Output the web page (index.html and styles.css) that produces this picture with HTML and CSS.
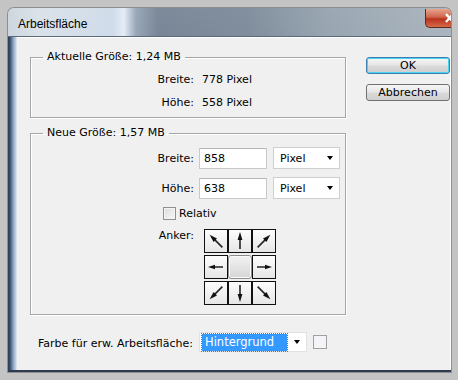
FILE: index.html
```html
<!DOCTYPE html>
<html lang="de">
<head>
  <meta charset="UTF-8">
  <title>Arbeitsfläche</title>
  <link rel="stylesheet" href="styles.css">
</head>
<body>
  <div class="window">
    <div class="titlebar">
      <span class="title">Arbeitsfläche</span>
      <div class="close">
        <svg width="26" height="19" viewBox="0 0 26 19"><path d="M20 5 L27 13 M27 5 L20 13" stroke="#fff" stroke-width="2.4"/></svg>
      </div>
    </div>
    <div class="frame">
      <div class="edge"></div>
      <div class="content">
        <div class="main">
          <div class="groups">
            <fieldset class="group current">
              <legend>Aktuelle Größe: 1,24 MB</legend>
              <div class="row"><span class="label">Breite:</span><span class="value">778 Pixel</span></div>
              <div class="row"><span class="label">Höhe:</span><span class="value">558 Pixel</span></div>
            </fieldset>

            <fieldset class="group new">
              <legend>Neue Größe: 1,57 MB</legend>
              <div class="field">
                <span class="label">Breite:</span>
                <input class="num" type="text" value="858">
                <div class="select unit">Pixel<span class="caret"></span></div>
              </div>
              <div class="field">
                <span class="label">Höhe:</span>
                <input class="num" type="text" value="638">
                <div class="select unit">Pixel<span class="caret"></span></div>
              </div>
              <div class="check-row"><span class="checkbox"></span>Relativ</div>
              <div class="anchor-row">
                <span class="label">Anker:</span>
                <div class="anchor">
                  <div class="cell"><svg viewBox="0 0 22 22"><g transform="rotate(-45 11 11)"><path d="M11 20 V8" class="shaft"/><path d="M11 2 L8.6 10 L13.4 10 Z"/></g></svg></div>
                  <div class="cell"><svg viewBox="0 0 22 22"><g><path d="M11 19 V8" class="shaft"/><path d="M11 2 L8.6 10 L13.4 10 Z"/></g></svg></div>
                  <div class="cell"><svg viewBox="0 0 22 22"><g transform="rotate(45 11 11)"><path d="M11 20 V8" class="shaft"/><path d="M11 2 L8.6 10 L13.4 10 Z"/></g></svg></div>
                  <div class="cell"><svg viewBox="0 0 22 22"><g transform="rotate(-90 11 11)"><path d="M11 18 V8" class="shaft"/><path d="M11 3 L8.8 10 L13.2 10 Z"/></g></svg></div>
                  <div class="cell center"></div>
                  <div class="cell"><svg viewBox="0 0 22 22"><g transform="rotate(90 11 11)"><path d="M11 18 V8" class="shaft"/><path d="M11 3 L8.8 10 L13.2 10 Z"/></g></svg></div>
                  <div class="cell"><svg viewBox="0 0 22 22"><g transform="rotate(-135 11 11)"><path d="M11 20 V8" class="shaft"/><path d="M11 2 L8.6 10 L13.4 10 Z"/></g></svg></div>
                  <div class="cell"><svg viewBox="0 0 22 22"><g transform="rotate(180 11 11)"><path d="M11 19 V8" class="shaft"/><path d="M11 2 L8.6 10 L13.4 10 Z"/></g></svg></div>
                  <div class="cell"><svg viewBox="0 0 22 22"><g transform="rotate(135 11 11)"><path d="M11 20 V8" class="shaft"/><path d="M11 2 L8.6 10 L13.4 10 Z"/></g></svg></div>
                </div>
              </div>
            </fieldset>
          </div>

          <div class="buttons">
            <button class="btn default">OK</button>
            <button class="btn">Abbrechen</button>
          </div>
        </div>

        <div class="canvas-row">
          <span class="canvas-label">Farbe für erw. Arbeitsfläche:</span>
          <div class="select color"><span class="picked">Hintergrund</span><span class="caret"></span></div>
          <span class="swatch"></span>
        </div>
      </div>
    </div>
  </div>
</body>
</html>
```

FILE: styles.css
```css
body {
  margin: 0;
  height: 380px;
  box-sizing: border-box;
  padding: 8px 7px 8px 8px;
  background: #c4c4c4;
  overflow: hidden;
  font-family: "DejaVu Sans", Verdana, sans-serif;
  font-size: 11px;
  color: #000;
}

.window {
  height: 364px;
  border-radius: 6px 6px 0 0;
  overflow: hidden;
  box-shadow: 0 0 0 1px #8e8e8e;
  background:
    linear-gradient(180deg, rgba(255, 255, 255, 0.18), rgba(255, 255, 255, 0) 60%),
    linear-gradient(90deg, #c4ced8 0, #d3dce5 30px, #c6d5e6 105px, #dfe9f4 116px, #8596aa 128px, #5f7084 150px, #68788a 240px, #8595a3 320px, #9ba7b2 443px);
}

/* title bar */

.titlebar {
  height: 28px;
  display: flex;
  align-items: flex-start;
  border-bottom: 1px solid #5a6a7c;
}

.title {
  padding: 9px 0 0 10px;
  font-family: "Liberation Sans", Arial, sans-serif;
  font-size: 12px;
  line-height: 14px;
  color: #000;
}

.close {
  margin-left: auto;
  margin-top: 1px;
  width: 26px;
  height: 19px;
  box-sizing: border-box;
  border: 1px solid #5d2a22;
  border-right: none;
  border-top: none;
  border-radius: 0 0 0 5px;
  background: linear-gradient(180deg, #e8a48e 0, #d0644c 45%, #b8321e 55%, #d66a48 100%);
  overflow: hidden;
}

.close svg {
  display: block;
}

/* window body */

.frame {
  display: flex;
  height: 333px;
  border-bottom: 2px solid #2e3c52;
}

.edge {
  width: 9px;
  background: linear-gradient(90deg, #2c3a52 0, #3c4e6a 2px, #6a82a2 4px, #9fb4cc 6px, #c5d4e4 8px, #e8eef4 9px);
}

.content {
  flex: 1;
  background: #f0f0f0;
  border-top: 1px solid #fff;
  border-right: 1px solid #fff;
  padding: 12px 0 0 13px;
  overflow: hidden;
}

.main {
  display: flex;
  gap: 20px;
}

.groups {
  width: 319px;
  display: flex;
  flex-direction: column;
  gap: 8px;
}

.group {
  margin: 0;
  padding: 0;
  border: 1px solid #a6a6a6;
  box-shadow: inset 1px 1px 0 #fff, 1px 1px 0 #fff;
}

.group legend {
  margin-left: 12px;
  padding: 0 4px;
  line-height: 14px;
}

.label {
  width: 163px;
  flex: none;
  text-align: right;
}

/* current size */

.current {
  padding: 4px 0 3px;
}

.row {
  display: flex;
  height: 23px;
  line-height: 23px;
}

.value {
  margin-left: 8px;
}

/* new size */

.new {
  padding: 7px 0 9px;
}

.field {
  display: flex;
  align-items: center;
  height: 22px;
  margin-bottom: 8px;
}

.num {
  margin: 0 0 0 5px;
  width: 68px;
  height: 21px;
  box-sizing: border-box;
  padding: 0 4px;
  border: 1px solid #c9c9c9;
  border-top-color: #b5b5b5;
  background: #fff;
  font: inherit;
  color: #000;
}

.select {
  display: flex;
  align-items: center;
  box-sizing: border-box;
  background: #fff;
  border: 1px solid #cfcfcf;
}

.unit {
  margin-left: 6px;
  width: 67px;
  height: 22px;
  padding: 0 6px;
}

.caret {
  margin-left: auto;
  width: 0;
  height: 0;
  border-left: 3.5px solid transparent;
  border-right: 3.5px solid transparent;
  border-top: 4px solid #000;
}

.check-row {
  display: flex;
  align-items: center;
  height: 16px;
  margin: -2px 0 8px 132px;
}

.checkbox {
  width: 13px;
  height: 13px;
  box-sizing: border-box;
  margin-right: 3px;
  border: 1px solid #8e8f8f;
  background: linear-gradient(135deg, #dcdcdc, #f8f8f8);
  box-shadow: inset 0 0 0 1px #f4f4f4;
}

.anchor-row {
  display: flex;
  align-items: flex-start;
}

.anchor-row .label {
  line-height: 14px;
}

.anchor {
  margin-left: 10px;
  display: grid;
  grid-template-columns: repeat(3, 24px);
  grid-template-rows: repeat(3, 24px);
  row-gap: 2px;
}

.cell {
  box-sizing: border-box;
  border: 1px solid #111;
  background: linear-gradient(180deg, #fdfdfd, #e6e6e6);
}

.cell svg {
  display: block;
  width: 22px;
  height: 22px;
}

.cell path {
  fill: #111;
}

.cell .shaft {
  fill: none;
  stroke: #222;
  stroke-width: 1.6;
}

.cell.center {
  border: 1px solid #8c8c8c;
  border-radius: 3px;
  background: linear-gradient(180deg, #f2f2f2, #d6d6d6);
  box-shadow: inset 0 0 0 1px #fbfbfb;
}

/* buttons */

.buttons {
  display: flex;
  flex-direction: column;
  gap: 10px;
  padding-top: 7px;
}

.btn {
  width: 84px;
  height: 17px;
  padding: 0;
  border: 1px solid #707070;
  border-radius: 3px;
  background: linear-gradient(180deg, #f6f6f6 0, #e6e6e6 48%, #dadada 52%, #cfcfcf 100%);
  font-family: inherit;
  font-size: 11px;
  line-height: 15px;
  color: #000;
}

.btn.default {
  border-color: #3c7fb1;
  box-shadow: inset 0 0 0 1px #48d4f0;
}

/* bottom row */

.canvas-row {
  display: flex;
  align-items: center;
  margin: 17px 0 0 8px;
}

.canvas-label {
  width: 161px;
  flex: none;
  margin-top: 3px;
}

.color {
  width: 108px;
  height: 20px;
  padding: 0 6px 0 2px;
  border-color: #e2e2e2;
}

.picked {
  width: 85px;
  height: 17px;
  box-sizing: border-box;
  padding-left: 3px;
  line-height: 17px;
  background: #3399ff;
  color: #fff;
  font-size: 11.5px;
  outline: 1px dotted #b0601a;
}

.swatch {
  margin-left: 6px;
  width: 14px;
  height: 14px;
  box-sizing: border-box;
  border: 1px solid #a0a0a0;
  background: #f4f4f8;
}
```
